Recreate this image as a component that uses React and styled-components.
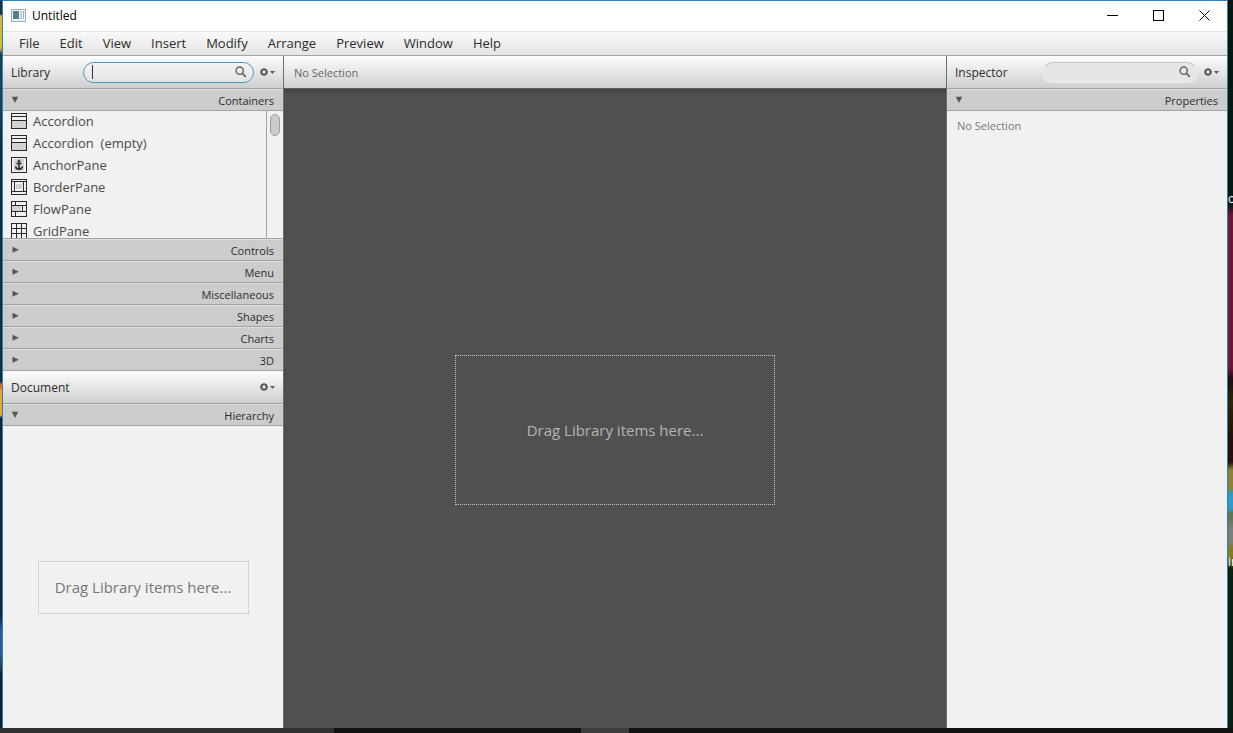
import React, { useState } from 'react'
import styled, { createGlobalStyle, ThemeProvider } from 'styled-components'

const theme = {
  colors: {
    panel: '#f1f1f1',
    section: '#cccccc',
    line: '#a3a3a3',
    dark: '#505050',
    text: '#2c2c2c',
    focus: '#3e9cbc'
  }
}

const GlobalStyle = createGlobalStyle`
  * {
    box-sizing: border-box;
  }
  body {
    margin: 0;
    font-family: 'Open Sans', 'Noto Sans', sans-serif;
    font-size: 13px;
    color: ${({ theme }) => theme.colors.text};
  }
  button, input {
    font: inherit;
    color: inherit;
  }
  button {
    padding: 0;
    border: 0;
    background: none;
  }
`

const Screen = styled.div`
  height: 100vh;
  display: flex;
  flex-direction: column;
  overflow: hidden;
`

const Desktop = styled.div`
  flex: 1;
  min-height: 0;
  display: grid;
  grid-template-columns: 2px minmax(0, 1fr) 5px;
`

const LeftEdge = styled.div`
  background: linear-gradient(
    #163450 0 14px, #d8b53c 16px 48px, #17405a 54px 100px, #0c3048 140px 382px,
    #e0662a 384px 388px, #efa52c 390px 415px, #0c2740 418px 615px,
    #2c55a4 630px 655px, #23453f 668px, #0b2033 675px
  );
`

const RightEdge = styled.div`
  position: relative;
  overflow: hidden;
  background: linear-gradient(
    #07160f 0 205px, #6c1634 215px 368px, #1a0d0c 380px, #2a260c 400px,
    #260f0a 440px 462px, #8b8130 470px 488px, #2d9acb 494px 508px,
    #5c7350 514px, #7d7f78 530px 542px, #857c27 548px 556px, #0d1d10 570px
  );
`

const EdgeLabel = styled.span`
  position: absolute;
  left: 0;
  top: ${({ $top }) => $top}px;
  color: #fff;
  font-size: 12px;
  line-height: 16px;
`

const Taskbar = styled.div`
  height: 5px;
  display: flex;
  background: #111;
`

const TaskItem = styled.div`
  width: ${({ $width }) => $width}px;
  background: ${({ $active }) => ($active ? '#3c3c3c' : '#303132')};
  margin-right: ${({ $gap }) => $gap || 0}px;
`

const Window = styled.main`
  min-width: 0;
  display: flex;
  flex-direction: column;
  background: #fff;
  border: 1px solid #2f80b5;
  border-bottom: 0;
`

const TitleBar = styled.header`
  height: 30px;
  display: flex;
  align-items: center;
  padding: 0 0 2px 8px;
  color: #000;
`

const Title = styled.h1`
  flex: 1;
  margin: 0 0 0 6px;
  font-size: 12px;
  font-weight: 400;
`

const WindowButton = styled.button`
  width: 46px;
  height: 28px;
  display: grid;
  place-items: center;
`

const MenuBar = styled.nav`
  height: 25px;
  display: flex;
  padding-left: 6px;
  border-top: 1px solid #e4e4e4;
  border-bottom: 1px solid ${({ theme }) => theme.colors.line};
  background: linear-gradient(#f9f9f9, #e4e4e4);
`

const MenuButton = styled.button`
  padding: 0 10px 1px;
`

const Workspace = styled.div`
  flex: 1;
  min-height: 0;
  display: grid;
  grid-template-columns: 281px minmax(0, 1fr) 281px;
`

const Column = styled.section`
  min-width: 0;
  min-height: 0;
  display: flex;
  flex-direction: column;
  background: ${({ theme, $dark }) => ($dark ? theme.colors.dark : theme.colors.panel)};
  border-left: ${({ $side }) => ($side === 'right' ? '1px solid #6e6e6e' : '0')};
  border-right: ${({ $side }) => ($side === 'left' ? '1px solid #6e6e6e' : '0')};
`

const PanelHeader = styled.div`
  height: 33px;
  flex: none;
  display: flex;
  align-items: center;
  padding: 0 8px;
  background: linear-gradient(#fdfdfd, #cfcfcf);
  border-bottom: 1px solid ${({ theme }) => theme.colors.line};
`

const PanelTitle = styled.h2`
  flex: 1;
  margin: 0;
  font-size: 12px;
  font-weight: 400;
`

const SelectionBar = styled(PanelHeader)`
  padding: 0 10px;
  font-size: 11px;
  color: #666;
  border-bottom-color: #5c5c5c;
`

const SearchBox = styled.label`
  position: relative;
  width: ${({ $width }) => $width}px;
  height: 21px;
  margin-right: 5px;
  display: flex;
  align-items: center;
  padding: 0 6px 0 9px;
  border-radius: 11px;
  border: 1px solid ${({ theme, $active }) => ($active ? theme.colors.focus : '#ececec')};
  border-top-color: ${({ theme, $active }) => ($active ? theme.colors.focus : '#c6c6c6')};
  background: ${({ $active }) => ($active ? 'linear-gradient(#f3f3f3, #e4e4e4)' : '#e6e6e6')};

  &::before {
    content: '';
    display: ${({ $active }) => ($active ? 'block' : 'none')};
    position: absolute;
    left: 8px;
    width: 1px;
    height: 14px;
    background: #333;
  }
`

const SearchInput = styled.input`
  flex: 1;
  min-width: 0;
  border: 0;
  padding: 0;
  outline: 0;
  background: none;
  caret-color: transparent;
`

const GearButton = styled.button`
  width: 16px;
  height: 16px;
  display: grid;
  place-items: center;
`

const SectionButton = styled.button`
  width: 100%;
  height: 22px;
  flex: none;
  display: flex;
  align-items: center;
  justify-content: space-between;
  padding: 0 9px 0 8px;
  font-size: 11px;
  background: ${({ theme }) => theme.colors.section};
  border-top: 1px solid #dedede;
  border-bottom: 1px solid ${({ theme }) => theme.colors.line};
`

const LibraryBody = styled.div`
  height: 128px;
  flex: none;
  display: flex;
  overflow: hidden;
  border-bottom: 1px solid ${({ theme }) => theme.colors.line};
`

const ItemList = styled.ul`
  flex: 1;
  margin: -1px 0 0;
  padding: 0;
  list-style: none;
`

const Item = styled.li`
  height: 22px;
  display: flex;
  align-items: center;
  gap: 6px;
  padding-left: 8px;
  line-height: 14px;
  color: #4a4a4a;
  white-space: pre;
`

const ScrollTrack = styled.div`
  width: 17px;
  padding: 3px;
  border-left: 1px solid ${({ theme }) => theme.colors.line};
`

const ScrollThumb = styled.div`
  width: 10px;
  height: 22px;
  border: 1px solid #9c9c9c;
  border-radius: 5px;
  background: #cbcbcb;
`

const DropArea = styled.div`
  flex: 1;
  min-height: 0;
  display: grid;
  place-items: center;
  padding-top: ${({ $dark }) => ($dark ? 42 : 20)}px;
  box-shadow: ${({ $dark }) => ($dark ? 'inset 0 4px 4px -2px #3c3c3c' : 'none')};
`

const DropTarget = styled.div`
  width: ${({ $width }) => $width}px;
  height: ${({ $height }) => $height}px;
  display: grid;
  place-items: center;
  font-size: 15px;
  color: ${({ $dark }) => ($dark ? '#b4b4b4' : '#777')};
  border: 1px dotted ${({ $dark }) => ($dark ? '#c4c4c4' : '#b4b4b4')};
`

const EmptyNote = styled.p`
  margin: 0;
  padding: 7px 10px;
  font-size: 11px;
  color: #777;
`

const AppIcon = () => (
  <svg width='15' height='13' viewBox='0 0 15 13'>
    <rect x='.5' y='.5' width='14' height='12' fill='#f2f5f6' stroke='#a3adb2' />
    <rect x='2' y='2' width='6' height='8' fill='#4f8190' />
    <rect x='9' y='2' width='2' height='8' fill='#bfd4da' />
    <rect x='12' y='2' width='1' height='8' fill='#93b5bd' />
  </svg>
)

const SearchSvg = () => (
  <svg width='12' height='12' viewBox='0 0 12 12' fill='none' stroke='#666'>
    <circle cx='4.7' cy='4.7' r='3.6' strokeWidth='1.5' />
    <path d='M7.3 7.3L10.8 10.8' strokeWidth='1.8' />
  </svg>
)

const GearSvg = () => (
  <svg width='16' height='10' viewBox='0 0 16 10'>
    <circle cx='5' cy='5' r='2.6' fill='none' stroke='#5c5c5c' strokeWidth='1.9' />
    <path
      d='M5 1v1M5 8v1M1 5h1M8 5h1M2.2 2.2l.7.7M7.1 7.1l.7.7M7.8 2.2l-.7.7M2.9 7.1l-.7.7'
      stroke='#5c5c5c'
      strokeWidth='1.3'
    />
    <path d='M11 4h5l-2.5 3z' fill='#5c5c5c' />
  </svg>
)

const ArrowSvg = ({ open }) => (
  <svg width='8' height='8' viewBox='0 0 8 8' fill='#555'>
    <path d={open ? 'M.8 .8h6.4L4 7z' : 'M1.5 .8v6L7.8 3.8z'} />
  </svg>
)

const accordionLines = 'M0 3.5H16M0 7.5H16'

const ITEMS = [
  { name: 'Accordion', fill: [1, 8, 14, 7], d: accordionLines },
  { name: 'Accordion  (empty)', fill: [1, 8, 14, 7], d: accordionLines },
  {
    name: 'AnchorPane',
    fill: [3, 2, 10, 12],
    d: 'M8 4V13M5.5 6.5H10.5M4.5 9.5Q5 12.2 8 12.2Q11 12.2 11.5 9.5',
    bold: true
  },
  { name: 'BorderPane', fill: [5, 5, 6, 5], d: 'M0 2.5H16M0 12.5H16M3.5 2.5V12.5M12.5 2.5V12.5' },
  { name: 'FlowPane', fill: [1, 5, 9, 5], d: 'M0 4.5H16M0 10.5H16M4.5 0V4.5M11.5 4.5V10.5M4.5 10.5V15' },
  { name: 'GridPane', d: 'M0 5.5H16M0 10.5H16M5.5 0V16M10.5 0V16' }
]

const ItemSvg = ({ item }) => {
  const [x, y, width, height] = item.fill || [0, 0, 0, 0]
  return (
    <svg width='16' height='16' viewBox='0 0 16 16' fill='none' stroke='#2a2a2a'>
      <rect x={x} y={y} width={width} height={height} fill='#d2d2d2' stroke='none' />
      <rect x='.5' y='.5' width='15' height='15' />
      <path d={item.d} strokeWidth={item.bold ? 1.5 : 1} />
      {item.bold && <circle cx='8' cy='4' r='1' />}
    </svg>
  )
}

const MENUS = ['File', 'Edit', 'View', 'Insert', 'Modify', 'Arrange', 'Preview', 'Window', 'Help']
const SECTIONS = ['Containers', 'Controls', 'Menu', 'Miscellaneous', 'Shapes', 'Charts', '3D']

const Gear = ({ label }) => (
  <GearButton aria-label={label}>
    <GearSvg />
  </GearButton>
)

const Search = ({ label, width, active }) => {
  const [value, setValue] = useState('')

  return (
    <SearchBox $width={width} $active={active}>
      <SearchInput
        type='text'
        aria-label={label}
        value={value}
        onChange={e => setValue(e.target.value)}
      />
      <SearchSvg />
    </SearchBox>
  )
}

const Section = ({ name, open, onClick }) => (
  <SectionButton aria-expanded={open} onClick={onClick}>
    <ArrowSvg open={open} />
    <span>{name}</span>
  </SectionButton>
)

const Library = () => {
  const [current, setCurrent] = useState('Containers')

  return (
    <>
      <PanelHeader>
        <PanelTitle>Library</PanelTitle>
        <Search label='Search library' width={171} active />
        <Gear label='Library options' />
      </PanelHeader>
      {SECTIONS.map(name => (
        <React.Fragment key={name}>
          <Section name={name} open={name === current} onClick={() => setCurrent(name)} />
          {name === current && (
            <LibraryBody>
              <ItemList>
                {ITEMS.map(item => (
                  <Item key={item.name}>
                    <ItemSvg item={item} />
                    {item.name}
                  </Item>
                ))}
              </ItemList>
              <ScrollTrack>
                <ScrollThumb />
              </ScrollTrack>
            </LibraryBody>
          )}
        </React.Fragment>
      ))}
    </>
  )
}

const App = () => (
  <ThemeProvider theme={theme}>
    <GlobalStyle />
    <Screen>
      <Desktop>
        <LeftEdge />
        <Window>
          <TitleBar>
            <AppIcon />
            <Title>Untitled</Title>
            <WindowButton aria-label='Minimize'>
              <svg width='11' height='11' stroke='#000'>
                <path d='M0 5.5H11' />
              </svg>
            </WindowButton>
            <WindowButton aria-label='Maximize'>
              <svg width='11' height='11' stroke='#000' fill='none'>
                <rect x='.5' y='.5' width='10' height='10' />
              </svg>
            </WindowButton>
            <WindowButton aria-label='Close'>
              <svg width='11' height='11' stroke='#000'>
                <path d='M.5 .5L10.5 10.5M10.5 .5L.5 10.5' />
              </svg>
            </WindowButton>
          </TitleBar>
          <MenuBar>
            {MENUS.map(name => (
              <MenuButton key={name}>{name}</MenuButton>
            ))}
          </MenuBar>
          <Workspace>
            <Column $side='left'>
              <Library />
              <PanelHeader>
                <PanelTitle>Document</PanelTitle>
                <Gear label='Document options' />
              </PanelHeader>
              <Section name='Hierarchy' open />
              <DropArea>
                <DropTarget $width={211} $height={53}>
                  Drag Library items here...
                </DropTarget>
              </DropArea>
            </Column>
            <Column $dark>
              <SelectionBar>No Selection</SelectionBar>
              <DropArea $dark>
                <DropTarget $dark $width={320} $height={150}>
                  Drag Library items here...
                </DropTarget>
              </DropArea>
            </Column>
            <Column $side='right'>
              <PanelHeader>
                <PanelTitle>Inspector</PanelTitle>
                <Search label='Search properties' width={156} />
                <Gear label='Inspector options' />
              </PanelHeader>
              <Section name='Properties' open />
              <EmptyNote>No Selection</EmptyNote>
            </Column>
          </Workspace>
        </Window>
        <RightEdge>
          <EdgeLabel $top={191}>o</EdgeLabel>
          <EdgeLabel $top={554}>in</EdgeLabel>
        </RightEdge>
      </Desktop>
      <Taskbar>
        <TaskItem $width={334} $gap={247} />
        <TaskItem $width={48} $active />
      </Taskbar>
    </Screen>
  </ThemeProvider>
)

export default App
